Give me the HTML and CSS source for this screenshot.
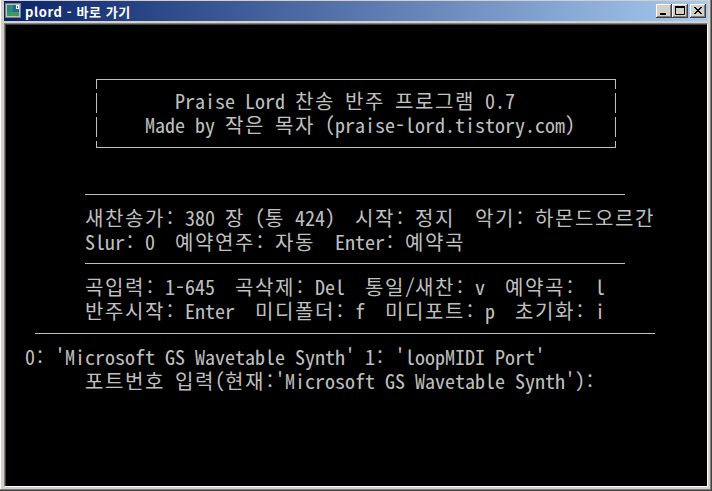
FILE: index.html
```html
<!DOCTYPE html>
<html lang="ko">
<head>
    <meta charset="UTF-8">
    <title>plord - 바로 가기</title>
    <link rel="stylesheet" href="styles.css">
</head>
<body>
    <div class="window">
        <div class="titlebar">
            <svg class="app-icon" width="16" height="16" viewBox="0 0 16 16">
                <rect x="0.5" y="0.5" width="15" height="14" fill="#c0c0c0" stroke="#808080"/>
                <rect x="2" y="2" width="12" height="11" fill="#1f6d8c"/>
                <rect x="2" y="2" width="6" height="11" fill="#2d8a78"/>
                <rect x="2" y="9" width="12" height="4" fill="#3f9a62"/>
                <rect x="11" y="2" width="3" height="4" fill="#ffffff"/>
                <rect x="12" y="3" width="1" height="2" fill="#1f6d8c"/>
            </svg>
            <span class="title">plord - 바로 가기</span>
            <div class="caption-btns">
                <div class="cap-btn">
                    <svg width="16" height="14" viewBox="0 0 16 14"><rect x="4" y="9" width="6" height="2" fill="#000"/></svg>
                </div>
                <div class="cap-btn">
                    <svg width="16" height="14" viewBox="0 0 16 14"><path d="M3.5 3.5h9v7h-9z" fill="none" stroke="#000"/><rect x="3" y="2" width="10" height="2" fill="#000"/></svg>
                </div>
                <div class="cap-btn close">
                    <svg width="16" height="14" viewBox="0 0 16 14"><path d="M4 3l7 7M5 3l7 7M11 3l-7 7M12 3l-7 7" stroke="#000" stroke-width="1"/></svg>
                </div>
            </div>
        </div>

        <div class="console">
            <div class="banner">
                <div class="line">   Praise Lord <span class="k">찬송</span> <span class="k">반주</span> <span class="k">프로그램</span> 0.7</div>
                <div class="line">Made by <span class="k">작은</span> <span class="k">목자</span> (praise-lord.tistory.com)</div>
            </div>

            <div class="rule rule-short"></div>
            <div class="block">
                <div class="line"><span class="k">새찬송가</span>: 380 <span class="k">장</span> (<span class="k">통</span> 424)  <span class="k">시작</span>: <span class="k">정지</span>  <span class="k">악기</span>: <span class="k">하몬드오르간</span></div>
                <div class="line">Slur: 0  <span class="k">예약연주</span>: <span class="k">자동</span>  Enter: <span class="k">예약곡</span></div>
            </div>

            <div class="rule rule-short"></div>
            <div class="block">
                <div class="line"><span class="k">곡입력</span>: 1-645  <span class="k">곡삭제</span>: Del  <span class="k">통일</span>/<span class="k">새찬</span>: v  <span class="k">예약곡</span>:  l</div>
                <div class="line"><span class="k">반주시작</span>: Enter  <span class="k">미디폴더</span>: f  <span class="k">미디포트</span>: p  <span class="k">초기화</span>: i</div>
            </div>

            <div class="rule rule-long"></div>
            <div class="ports">
                <div class="line">0: 'Microsoft GS Wavetable Synth' 1: 'loopMIDI Port'</div>
                <div class="line">      <span class="k">포트번호</span> <span class="k">입력</span>(<span class="k">현재</span>:'Microsoft GS Wavetable Synth'):</div>
            </div>
        </div>
    </div>
</body>
</html>
```

FILE: styles.css
```css
body {
    margin: 0;
    background: #d4d0c8;
}
.window {
    width: 712px;
    height: 491px;
    box-sizing: border-box;
    padding: 1px 4px 4px 4px;
    background: #d4d0c8;
    box-shadow: inset -1px -1px #404040, inset -2px -2px #808080, inset 1px 0 #ffffff;
    display: flex;
    flex-direction: column;
}
.titlebar {
    height: 20px;
    display: flex;
    align-items: center;
    padding: 0 2px 0 1px;
    background: linear-gradient(to right, #0a246a, #a6caf0);
}
.app-icon {
    margin-right: 4px;
}
.title {
    flex: 1;
    color: #ffffff;
    font-family: "Noto Sans CJK KR", "DejaVu Sans", sans-serif;
    font-size: 13px;
    font-weight: bold;
    letter-spacing: 0.6px;
}
.caption-btns {
    display: flex;
}
.cap-btn {
    width: 16px;
    height: 14px;
    background: #d4d0c8;
    box-shadow: inset -1px -1px #404040, inset 1px 1px #ffffff, inset -2px -2px #808080;
}
.cap-btn svg {
    display: block;
}
.cap-btn.close {
    margin-left: 2px;
}
.console {
    flex: 1;
    margin-top: 2px;
    background: #000000;
    border-style: solid;
    border-width: 1px;
    border-color: #808080 #ffffff #ffffff #808080;
    box-shadow: inset 1px 1px #404040;
    padding: 0 0 0 20px;
    color: #c0c0c0;
    font-family: "Noto Sans Mono CJK KR", "Noto Sans CJK KR", monospace;
    font-size: 20px;
    line-height: 24px;
}
.line {
    white-space: pre;
    height: 24px;
}
/* hangul glyphs are 0.92em, pad them out to a full 2-cell width */
.k {
    letter-spacing: 1.6px;
}
.banner {
    margin: 55px 0 0 71px;
    width: 520px;
    box-sizing: border-box;
    padding: 9px 0 10px 49px;
    border-top: 1px solid #c0c0c0;
    border-bottom: 1px solid #c0c0c0;
    background:
        repeating-linear-gradient(#c0c0c0 0 20px, transparent 20px 24px) left 0 top -11px / 1px calc(100% + 24px) no-repeat,
        repeating-linear-gradient(#c0c0c0 0 20px, transparent 20px 24px) right 0 top -11px / 1px calc(100% + 24px) no-repeat;
}
.rule {
    height: 1px;
    background: #c0c0c0;
}
.rule-short {
    margin-left: 60px;
    width: 540px;
}
.banner + .rule {
    margin-top: 46px;
}
.block + .rule {
    margin-top: 9px;
}
.rule-long {
    margin-left: 10px;
    width: 620px;
    margin-top: 10px !important;
}
.block {
    margin-left: 60px;
    margin-top: 11px;
}
.ports {
    margin-top: 11px;
}
```
